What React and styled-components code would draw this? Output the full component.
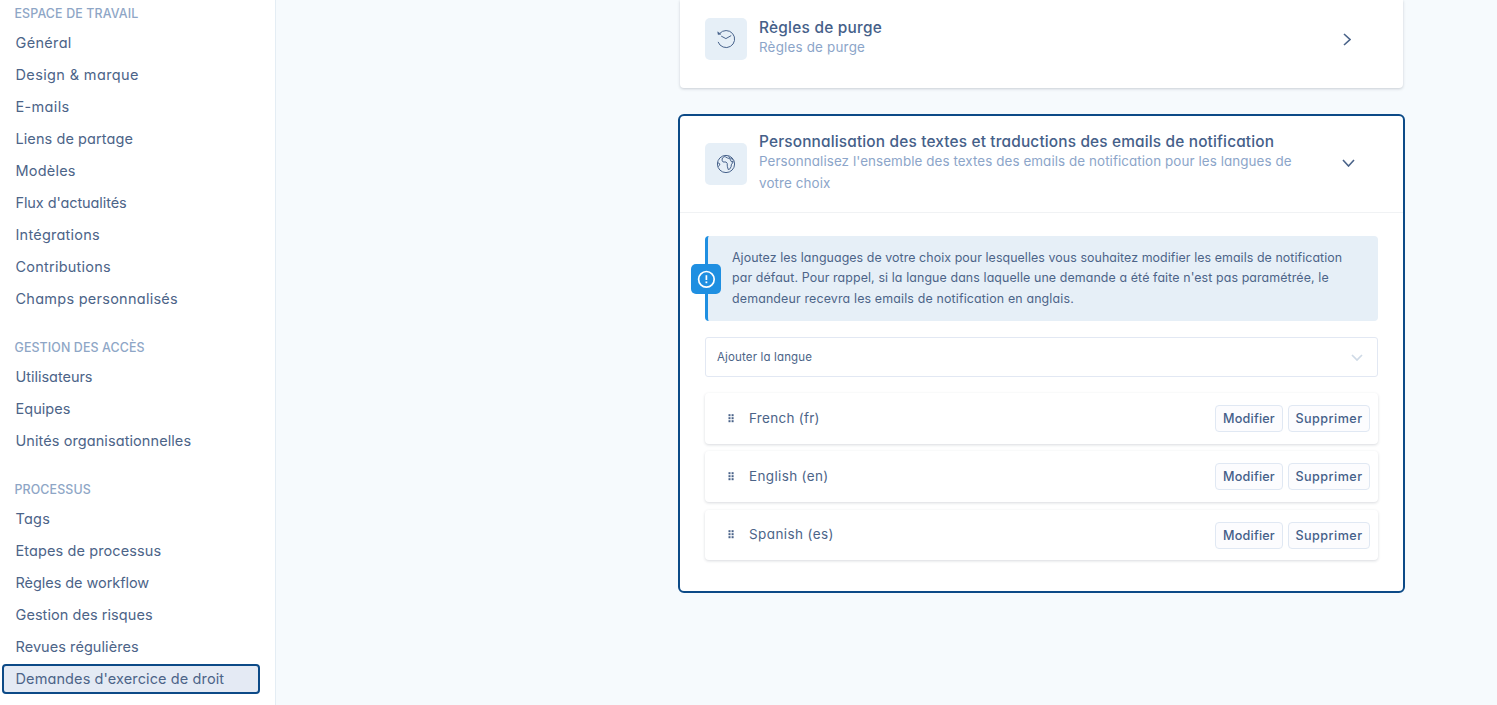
import React from "react";
import styled, { createGlobalStyle } from "styled-components";

const GlobalStyle = createGlobalStyle`
  * { box-sizing: border-box; }
  body {
    margin: 0;
    background: #f6fafd;
    color: #4c6488;
    font-family: Inter, "Liberation Sans", sans-serif;
    font-feature-settings: "cv11" 1;
  }
`;

const Page = styled.div`
  display: flex;
  height: 705px;
  overflow: hidden;
`;

const Sidebar = styled.nav`
  width: 276px;
  flex: none;
  background: #fff;
  border-right: 1px solid #e4edf4;
`;

const Group = styled.section`
  display: flex;
  flex-direction: column;
`;

const GroupTitle = styled.h2`
  margin: 0;
  height: ${(p) => (p.$first ? 27 : 46)}px;
  padding: ${(p) => (p.$first ? 4 : 23)}px 15px 0 14.5px;
  font-size: 12.4px;
  line-height: 20px;
  font-weight: 500;
  letter-spacing: ${(p) => p.$track}px;
  color: #8ea6c6;
  white-space: nowrap;
`;

const NavItem = styled.a`
  height: ${(p) => (p.$active ? 30 : 32)}px;
  margin: ${(p) => (p.$active ? "1px 15px 1px 2px" : "0")};
  padding-left: ${(p) => (p.$active ? 11.5 : 15.5)}px;
  border: ${(p) => (p.$active ? "2px solid #0c4a87" : "0")};
  border-radius: 4px;
  background: ${(p) => (p.$active ? "#e4eaf4" : "transparent")};
  font-size: 14.5px;
  line-height: ${(p) => (p.$active ? 26 : 32)}px;
  letter-spacing: ${(p) => p.$track}px;
  white-space: nowrap;
`;

const Main = styled.main`
  flex: 1;
  display: flex;
  flex-direction: column;
  padding: 0 92px 0 402px;
`;

const PurgeCard = styled.section`
  height: 88px;
  margin: 0 2px 26px;
  padding: 18px 24px 0 25px;
  background: #fff;
  border-radius: 0 0 4px 4px;
  box-shadow: 0 1px 3px rgba(40, 50, 70, 0.22);
  display: flex;
  align-items: flex-start;
`;

const OpenCard = styled.section`
  height: 479px;
  flex: none;
  background: #fff;
  border: 2px solid #0c4a87;
  border-radius: 6px;
`;

const OpenHeader = styled.header`
  height: 97px;
  padding: 0 24px 0 25px;
  border-bottom: 1px solid #f0f2f4;
  display: flex;
  align-items: center;
`;

const IconTile = styled.div`
  width: 42px;
  height: 42px;
  flex: none;
  border-radius: 5px;
  background: #e6eff7;
  display: flex;
  align-items: center;
  justify-content: center;
`;

const Heading = styled.div`
  flex: 1;
  padding: 0 0 2px 12px;
`;

const Title = styled.h3`
  margin: 0;
  font-size: 15.4px;
  line-height: ${(p) => p.$line}px;
  font-weight: 500;
  letter-spacing: ${(p) => p.$track}px;
  color: #456089;
  white-space: nowrap;
`;

const Subtitle = styled.p`
  margin: 0;
  font-size: 13.4px;
  line-height: ${(p) => p.$line}px;
  letter-spacing: ${(p) => p.$track}px;
  color: #8ca5c9;
  white-space: nowrap;
`;

const SubtitleBlock = styled.div`
  margin-top: ${(p) => p.$top}px;
`;

const Toggle = styled.span`
  display: flex;
  flex: none;
  margin-top: ${(p) => p.$top}px;
  margin-right: ${(p) => p.$right}px;
`;

const CardBody = styled.div`
  padding: 23px 25px 0;
`;

const Notice = styled.div`
  height: 85px;
  background: #e6eff7;
  border-left: 3px solid #1f8fe1;
  border-radius: 4px;
  display: flex;
  align-items: center;
`;

const NoticeBadge = styled.span`
  width: 30px;
  height: 30px;
  flex: none;
  margin-left: -17px;
  border-radius: 5px;
  background: #1f8fe1;
  display: flex;
  align-items: center;
  justify-content: center;
`;

const NoticeText = styled.div`
  padding-left: 11px;
`;

const NoticeLine = styled.div`
  font-size: 12.4px;
  line-height: 20.5px;
  letter-spacing: ${(p) => p.$track}px;
  white-space: nowrap;
`;

const Select = styled.div`
  height: 40px;
  margin: 16px 0;
  padding: 0 14px 0 11px;
  border: 1px solid #e2e8f3;
  border-radius: 3px;
  display: flex;
  align-items: center;
  justify-content: space-between;
  font-size: 11.5px;
  letter-spacing: 0.15px;
`;

const LanguageList = styled.div`
  display: flex;
  flex-direction: column;
  gap: 7.75px;
`;

const LanguageRow = styled.div`
  height: 50.5px;
  padding: 0 8px 0 23px;
  border-radius: 4px;
  background: #fff;
  box-shadow: 0 1px 3px rgba(40, 50, 70, 0.18);
  display: flex;
  align-items: center;
`;

const LanguageName = styled.span`
  flex: 1;
  padding: 0 0 1.5px 15px;
  font-size: 13.5px;
  line-height: 20px;
  letter-spacing: ${(p) => p.$track}px;
`;

const Action = styled.button`
  width: ${(p) => p.$width}px;
  height: 27px;
  margin: 0.6px 0 0 5px;
  padding: 0;
  border: 1px solid #e0e8f3;
  border-radius: 4px;
  background: #fcfcfe;
  color: #456089;
  font-family: inherit;
  font-feature-settings: inherit;
  font-size: 12.6px;
  font-weight: 500;
  letter-spacing: ${(p) => p.$track}px;
`;

const Chevron = ({ down, width, height, color, stroke }) => (
  <svg width={width} height={height} viewBox={`0 0 ${width} ${height}`} fill="none" stroke={color} strokeWidth={stroke}>
    <polyline points={down ? `1,1 ${width / 2},${height - 1} ${width - 1},1` : `1,1 ${width - 1},${height / 2} 1,${height - 1}`} />
  </svg>
);

const HistoryIcon = () => (
  <svg width="20" height="20" viewBox="0 0 20 20" fill="none" stroke="#48638c" strokeWidth="1">
    <path d="M3.6 4.6A8.5 8.5 0 1 1 2.1 12.9" />
    <path d="M5.2 7.1L9.9 9.6L15.2 6.6" />
    <path d="M1.7 2.8L2.1 5.6L4.9 5.2Z" fill="#48638c" strokeWidth="0.5" />
  </svg>
);

const GlobeIcon = () => (
  <svg width="20" height="20" viewBox="0 0 20 20" fill="none" stroke="#48638c" strokeWidth="1" strokeLinejoin="round">
    <circle cx="10" cy="10" r="8.6" />
    <path d="M8.2 2.6L6.4 4L6 6.2L7.1 8L10 8L11.2 9.3L11.3 12.2L12.2 15.5L13.6 15.2L15.1 12.8L15.3 10.8L17 8.2L15.4 7.7L13.7 4.6L11.3 3.9L9.6 2.9Z" />
    <path d="M12.6 2.4L14.5 4.4L17 5.3M15.5 7.6L17.8 7M1.5 8.6L3.6 9.6L3.8 11L2.2 12.6" />
  </svg>
);

const AlertIcon = () => (
  <svg width="20" height="20" viewBox="0 0 20 20" fill="none" stroke="#fff">
    <circle cx="10.4" cy="10.3" r="7.8" strokeWidth="1.7" />
    <path d="M10.4 6.2V11" strokeWidth="1.7" />
    <path d="M10.4 12.4V14.2" strokeWidth="1.8" />
  </svg>
);

const DragHandle = () => (
  <svg width="6" height="9" viewBox="0 0 6 9" fill="#4a6389">
    {[0, 3, 6].map((y) => (
      <React.Fragment key={y}>
        <rect x="0.5" y={y + 0.2} width="2" height="2" />
        <rect x="3.6" y={y + 0.2} width="2" height="2" />
      </React.Fragment>
    ))}
  </svg>
);

const groups = [
  {
    title: "ESPACE DE TRAVAIL",
    track: 0.14,
    items: [
      ["Général", 0.33],
      ["Design & marque", 0.37],
      ["E-mails", 0.33],
      ["Liens de partage", 0.08],
      ["Modèles", 0.2],
      ["Flux d'actualités", -0.1],
      ["Intégrations", 0.23],
      ["Contributions", 0.23],
      ["Champs personnalisés", 0.26],
    ],
  },
  {
    title: "GESTION DES ACCÈS",
    track: 0.12,
    items: [
      ["Utilisateurs", -0.03],
      ["Equipes", 0.03],
      ["Unités organisationnelles", 0.08],
    ],
  },
  {
    title: "PROCESSUS",
    track: 0.12,
    items: [
      ["Tags", 0.25],
      ["Etapes de processus", 0.1],
      ["Règles de workflow", -0.06],
      ["Gestion des risques", 0.06],
      ["Revues régulières", 0.06],
      ["Demandes d'exercice de droit", 0.11],
    ],
  },
];

const languages = [
  ["French (fr)", 0.28],
  ["English (en)", 0.35],
  ["Spanish (es)", 0.4],
];

export default function App() {
  return (
    <>
      <GlobalStyle />
      <Page>
        <Sidebar>
          {groups.map((group, index) => (
            <Group key={group.title}>
              <GroupTitle $first={index === 0} $track={group.track}>{group.title}</GroupTitle>
              {group.items.map(([label, track]) => (
                <NavItem key={label} $track={track} $active={label === "Demandes d'exercice de droit"}>
                  {label}
                </NavItem>
              ))}
            </Group>
          ))}
        </Sidebar>
        <Main>
          <PurgeCard>
            <IconTile><HistoryIcon /></IconTile>
            <Heading>
              <Title $line={20} $track={0.25}>Règles de purge</Title>
              <SubtitleBlock $top={-1}>
                <Subtitle $line={20} $track={0.2}>Règles de purge</Subtitle>
              </SubtitleBlock>
            </Heading>
            <Toggle $top={15} $right={28.5}>
              <Chevron width={8} height={13} color="#4a6389" stroke={1.6} />
            </Toggle>
          </PurgeCard>
          <OpenCard>
            <OpenHeader>
              <IconTile><GlobeIcon /></IconTile>
              <Heading>
                <Title $line={20} $track={0.165}>Personnalisation des textes et traductions des emails de notification</Title>
                <SubtitleBlock $top={-2}>
                  <Subtitle $line={22} $track={0.083}>
                    Personnalisez l'ensemble des textes des emails de notification pour les langues de
                  </Subtitle>
                  <Subtitle $line={22} $track={0.12}>votre choix</Subtitle>
                </SubtitleBlock>
              </Heading>
              <Toggle $top={-2} $right={24}>
                <Chevron down width={13} height={8} color="#4a6389" stroke={1.6} />
              </Toggle>
            </OpenHeader>
            <CardBody>
              <Notice>
                <NoticeBadge><AlertIcon /></NoticeBadge>
                <NoticeText>
                  <NoticeLine $track={0.075}>
                    Ajoutez les languages de votre choix pour lesquelles vous souhaitez modifier les emails de notification
                  </NoticeLine>
                  <NoticeLine $track={0.11}>
                    par défaut. Pour rappel, si la langue dans laquelle une demande a été faite n'est pas paramétrée, le
                  </NoticeLine>
                  <NoticeLine $track={0.16}>demandeur recevra les emails de notification en anglais.</NoticeLine>
                </NoticeText>
              </Notice>
              <Select>
                Ajouter la langue
                <Chevron down width={12} height={7} color="#cfdae6" stroke={1.7} />
              </Select>
              <LanguageList>
                {languages.map(([name, track]) => (
                  <LanguageRow key={name}>
                    <DragHandle />
                    <LanguageName $track={track}>{name}</LanguageName>
                    <Action $width={68} $track={0.2}>Modifier</Action>
                    <Action $width={82} $track={0.46}>Supprimer</Action>
                  </LanguageRow>
                ))}
              </LanguageList>
            </CardBody>
          </OpenCard>
        </Main>
      </Page>
    </>
  );
}
